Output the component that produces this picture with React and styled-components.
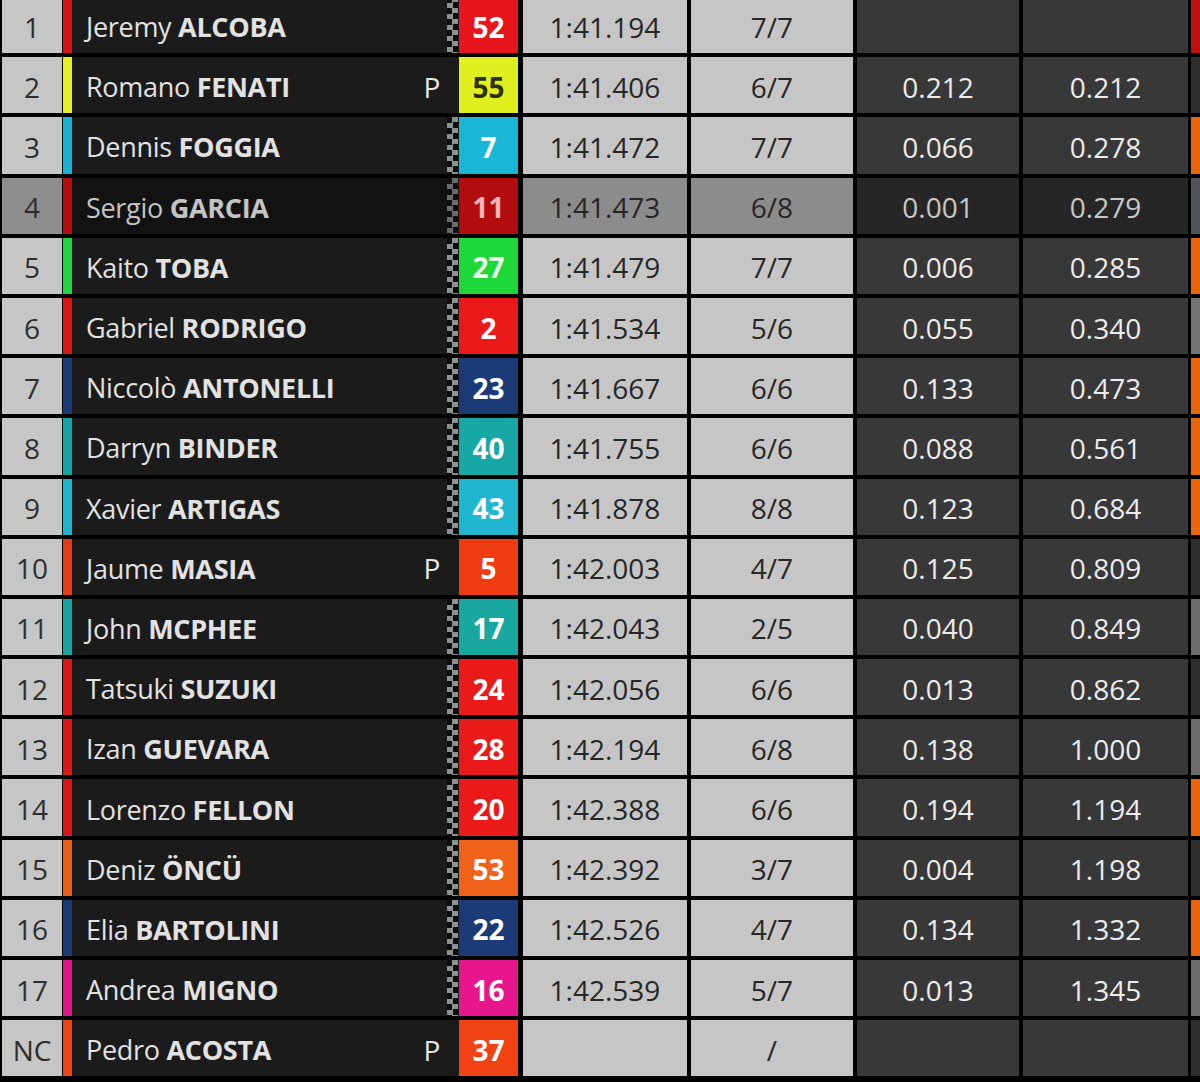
import React from "react";
import styled, { createGlobalStyle, css } from "styled-components";

const rows = [
  { pos: "1", first: "Jeremy", last: "ALCOBA", num: "52", box: "#e8161c", team: "#d81418", time: "1:41.194", laps: "7/7", gap: "", prev: "", edge: "#c01010" },
  { pos: "2", first: "Romano", last: "FENATI", p: true, num: "55", box: "#dff01e", ink: "#2c3008", team: "#e4f020", time: "1:41.406", laps: "6/7", gap: "0.212", prev: "0.212", edge: "#2e2e2e" },
  { pos: "3", first: "Dennis", last: "FOGGIA", num: "7", box: "#1ab6d6", team: "#18b2d4", time: "1:41.472", laps: "7/7", gap: "0.066", prev: "0.278", edge: "#e8660e" },
  { pos: "4", first: "Sergio", last: "GARCIA", num: "11", box: "#b20c0e", ink: "#f6b4b4", team: "#b40e10", time: "1:41.473", laps: "6/8", gap: "0.001", prev: "0.279", edge: "#505458", dim: true },
  { pos: "5", first: "Kaito", last: "TOBA", num: "27", box: "#1ed83a", ink: "#eaffe8", team: "#22d440", time: "1:41.479", laps: "7/7", gap: "0.006", prev: "0.285", edge: "#e8660e" },
  { pos: "6", first: "Gabriel", last: "RODRIGO", num: "2", box: "#ea1a1a", team: "#dc1616", time: "1:41.534", laps: "5/6", gap: "0.055", prev: "0.340", edge: "#747474" },
  { pos: "7", first: "Niccolò", last: "ANTONELLI", num: "23", box: "#1c3a76", team: "#1c3a76", time: "1:41.667", laps: "6/6", gap: "0.133", prev: "0.473", edge: "#e8660e" },
  { pos: "8", first: "Darryn", last: "BINDER", num: "40", box: "#17a8a6", team: "#16a4a4", time: "1:41.755", laps: "6/6", gap: "0.088", prev: "0.561", edge: "#e8660e" },
  { pos: "9", first: "Xavier", last: "ARTIGAS", num: "43", box: "#20b6d0", team: "#1eb4d0", time: "1:41.878", laps: "8/8", gap: "0.123", prev: "0.684", edge: "#e8660e" },
  { pos: "10", first: "Jaume", last: "MASIA", p: true, num: "5", box: "#f03c12", team: "#e43c14", time: "1:42.003", laps: "4/7", gap: "0.125", prev: "0.809", edge: "#2e2e2e" },
  { pos: "11", first: "John", last: "MCPHEE", num: "17", box: "#18a8a0", team: "#18a49e", time: "1:42.043", laps: "2/5", gap: "0.040", prev: "0.849", edge: "#6c6c6c" },
  { pos: "12", first: "Tatsuki", last: "SUZUKI", num: "24", box: "#ea1a1a", team: "#dc1616", time: "1:42.056", laps: "6/6", gap: "0.013", prev: "0.862", edge: "#2e2e2e" },
  { pos: "13", first: "Izan", last: "GUEVARA", num: "28", box: "#ea1a1a", team: "#dc1616", time: "1:42.194", laps: "6/8", gap: "0.138", prev: "1.000", edge: "#6c6c6c" },
  { pos: "14", first: "Lorenzo", last: "FELLON", num: "20", box: "#ea1a1a", team: "#dc1616", time: "1:42.388", laps: "6/6", gap: "0.194", prev: "1.194", edge: "#e8660e" },
  { pos: "15", first: "Deniz", last: "ÖNCÜ", num: "53", box: "#f0621a", team: "#e8601a", time: "1:42.392", laps: "3/7", gap: "0.004", prev: "1.198", edge: "#2e2e2e" },
  { pos: "16", first: "Elia", last: "BARTOLINI", num: "22", box: "#1c3a76", team: "#1c3a76", time: "1:42.526", laps: "4/7", gap: "0.134", prev: "1.332", edge: "#e8660e" },
  { pos: "17", first: "Andrea", last: "MIGNO", num: "16", box: "#e8168c", team: "#e01688", time: "1:42.539", laps: "5/7", gap: "0.013", prev: "1.345", edge: "#6c6c6c" },
  { pos: "NC", first: "Pedro", last: "ACOSTA", p: true, num: "37", box: "#f04212", team: "#ec4416", time: "", laps: "/", gap: "", prev: "", edge: "#2e2e2e" },
];

const GlobalStyle = createGlobalStyle`
  html, body {
    margin: 0;
    padding: 0;
    background: #000;
    overflow: hidden;
  }
  body {
    font-family: "Open Sans", "Noto Sans", sans-serif;
  }
`;

const Board = styled.div`
  width: 1200px;
  height: 1082px;
  overflow: hidden;
  background: #000;
`;

const List = styled.div`
  display: flex;
  flex-direction: column;
  gap: 4px;
  margin-top: -3px;
`;

const Row = styled.div`
  display: flex;
  height: 56.2px;
  padding-left: 2px;
`;

const cellText = css`
  display: flex;
  align-items: center;
  justify-content: center;
  box-sizing: border-box;
  padding-top: 3px;
  font-size: 28px;
`;

const Pos = styled.div`
  ${cellText};
  width: 60px;
  background: ${(p) => (p.$dim ? "#8e8e8e" : "#c6c6c6")};
  color: #2e2e2e;
`;

const Stripe = styled.div`
  width: 9px;
  margin-left: 1px;
  background: ${(p) => p.$color};
`;

const NameCell = styled.div`
  display: flex;
  align-items: center;
  width: 387px;
  box-sizing: border-box;
  padding: 3px 0 0 14px;
  background: ${(p) => (p.$dim ? "#121212" : "#1b1b1b")};
  color: ${(p) => (p.$dim ? "#c4c4c4" : "#e2e2e2")};
  font-size: 27px;
  letter-spacing: -0.3px;
`;

const Name = styled.span`
  flex: 1;
  white-space: nowrap;
  b {
    font-weight: 700;
  }
`;

const Pit = styled.span`
  margin-right: 19px;
  font-size: 28px;
  color: #e6e6e6;
`;

const Checker = styled.div`
  align-self: stretch;
  width: 11px;
  margin: -3px 1px 0 0;
  background: repeating-conic-gradient(#8a9292 0 25%, #0c0c0c 0 50%) 0 0 / 11px 11px;
  opacity: ${(p) => (p.$dim ? 0.7 : 1)};
`;

const Number = styled.div`
  ${cellText};
  width: 59px;
  background: ${(p) => p.$bg};
  color: ${(p) => p.$ink || "#ffffff"};
  font-weight: 700;
`;

const Light = styled.div`
  ${cellText};
  width: ${(p) => p.$w}px;
  margin-left: ${(p) => p.$gap}px;
  background: ${(p) => (p.$dim ? "#8c8c8c" : "#c6c6c6")};
  color: #262626;
`;

const Dark = styled.div`
  ${cellText};
  width: ${(p) => p.$w}px;
  margin-left: ${(p) => p.$gap}px;
  background: ${(p) => (p.$dim ? "#262626" : "#383838")};
  color: ${(p) => (p.$dim ? "#c8c8c8" : "#ececec")};
`;

const Edge = styled.div`
  width: 9px;
  margin-left: 3px;
  background: ${(p) => p.$color};
`;

export default function App() {
  return (
    <Board>
      <GlobalStyle />
      <List>
        {rows.map((r) => (
          <Row key={r.pos}>
            <Pos $dim={r.dim}>{r.pos}</Pos>
            <Stripe $color={r.team} />
            <NameCell $dim={r.dim}>
              <Name>
                {r.first} <b>{r.last}</b>
              </Name>
              {r.p ? <Pit>P</Pit> : <Checker $dim={r.dim} />}
            </NameCell>
            <Number $bg={r.box} $ink={r.ink}>
              {r.num}
            </Number>
            <Light $w={164} $gap={5} $dim={r.dim}>
              {r.time}
            </Light>
            <Light $w={162} $gap={4} $dim={r.dim}>
              {r.laps}
            </Light>
            <Dark $w={162} $gap={4} $dim={r.dim}>
              {r.gap}
            </Dark>
            <Dark $w={165} $gap={4} $dim={r.dim}>
              {r.prev}
            </Dark>
            <Edge $color={r.edge} />
          </Row>
        ))}
      </List>
    </Board>
  );
}
